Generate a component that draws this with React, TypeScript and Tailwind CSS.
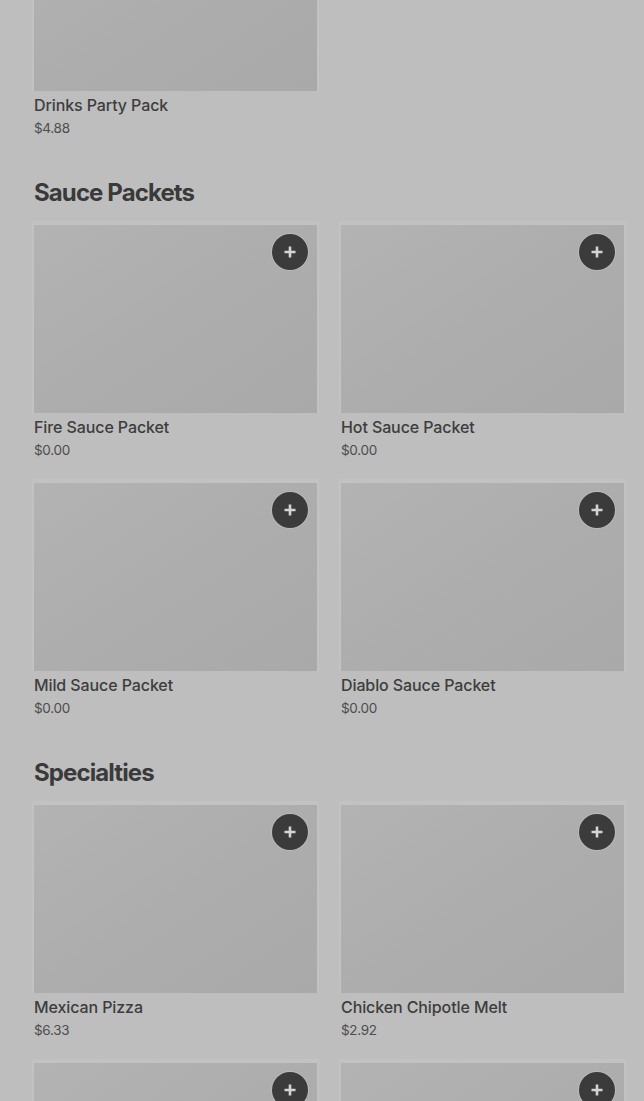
import React from "react";

type Item = { name?: string; price?: string; plus?: boolean };

const PlusButton = () => (
  <div className="absolute right-[9px] top-[9px] flex h-[36px] w-[36px] items-center justify-center rounded-full bg-[#3b3b3b] shadow-[0_0_0_1px_rgba(195,195,195,0.6)]">
    <svg width="14" height="14" viewBox="0 0 14 14" fill="none">
      <path d="M7 1.5v11M1.5 7h11" stroke="#d4d4d4" strokeWidth="2.6" />
    </svg>
  </div>
);

const Card = ({ item }: { item: Item }) => (
  <div className="flex flex-col">
    <div className="relative h-[188px] w-full bg-gradient-to-br from-[#b3b3b3] via-[#adadad] to-[#a9a9a9] shadow-[0_-2px_0_2px_#c2c2c2]">
      {item.plus !== false && <PlusButton />}
    </div>
    {item.name && (
      <div className="mt-[2px] text-[16px] font-medium leading-6 tracking-[-0.1px] text-[#3d3d3d]">{item.name}</div>
    )}
    {item.price && (
      <div className="mt-[1px] text-[13.5px] leading-5 tracking-[-0.3px] text-[#4d4d4d]">{item.price}</div>
    )}
  </div>
);

const Section = ({ title, items }: { title?: string; items: Item[] }) => (
  <section className="flex flex-col">
    {title && (
      <h2 className="mb-4 text-[24px] font-bold leading-8 tracking-[-0.9px] text-[#3a3a3a]">{title}</h2>
    )}
    <div className="grid grid-cols-2 gap-x-6 gap-y-[23px]">
      {items.map((it, i) => (
        <Card key={i} item={it} />
      ))}
    </div>
  </section>
);

export default function App() {
  return (
    <div
      className="h-[1101px] w-full overflow-hidden bg-[#bebebe] pl-[34px] pr-[20px]"
      style={{ fontFamily: "Inter, 'Noto Sans', sans-serif" }}
    >
      <div className="mt-[-97px] flex flex-col gap-[39px]">
        <Section items={[{ name: "Drinks Party Pack", price: "$4.88", plus: false }]} />
        <Section
          title="Sauce Packets"
          items={[
            { name: "Fire Sauce Packet", price: "$0.00" },
            { name: "Hot Sauce Packet", price: "$0.00" },
            { name: "Mild Sauce Packet", price: "$0.00" },
            { name: "Diablo Sauce Packet", price: "$0.00" },
          ]}
        />
        <Section
          title="Specialties"
          items={[
            { name: "Mexican Pizza", price: "$6.33" },
            { name: "Chicken Chipotle Melt", price: "$2.92" },
            {},
            {},
          ]}
        />
      </div>
    </div>
  );
}
